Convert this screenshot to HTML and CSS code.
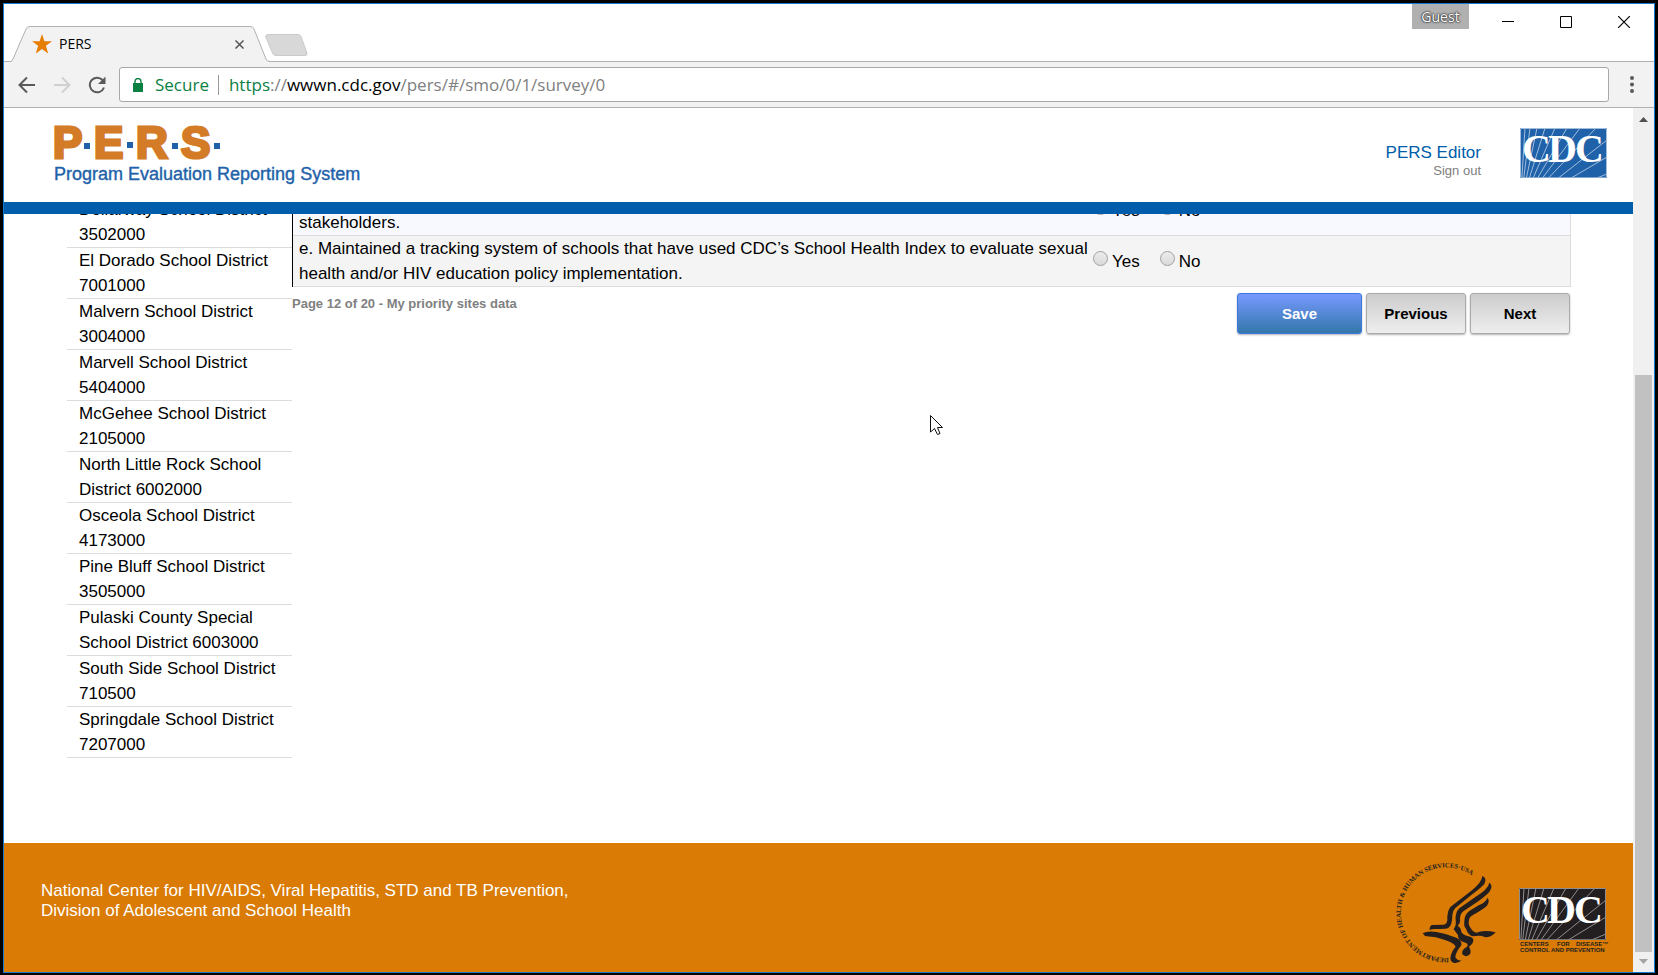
FILE: index.html
```html
<!DOCTYPE html>
<html lang="en">
<head>
  <meta charset="UTF-8" />
  <meta name="viewport" content="width=device-width, initial-scale=1.0" />
  <title>PERS</title>
  <link rel="stylesheet" href="styles.css">
</head>
<body>
  <div class="window">
    <div class="titlebar">
      <div class="tab">
        <svg class="tab-shape" width="260" height="37" viewBox="0 0 260 37">
          <path d="M0 35.500Q1 35 2 33L15 3Q16 .5 19 .5H239Q242 .5 243 3L255 33Q256 35.500 259 35.500V37H0Z" fill="#f2f2f2"/>
          <path d="M0 35.500Q1 35 2 33L15 3Q16 .5 19 .5H239Q242 .5 243 3L255 33Q256 35.500 259 35.500" fill="none" stroke="#b0b0b0"/>
        </svg>
        <svg class="tab-star" width="20" height="20" viewBox="0 0 20 20">
          <path d="M10 0L12.400 7.200H20L13.900 11.700L16.200 19.500L10 15L3.800 19.500L6.100 11.700L0 7.200H7.600Z" fill="#e67e00"/>
        </svg>
        <span class="tab-title">PERS</span>
        <button class="tab-close" aria-label="Close tab">
          <svg width="9" height="9" viewBox="0 0 9 9"><path d="M.5 .5L8.500 8.500M8.500 .5L.5 8.500" stroke="#555" stroke-width="1.500"/></svg>
        </button>
      </div>
      <button class="new-tab" aria-label="New tab">
        <svg width="43" height="22" viewBox="0 0 43 22"><path d="M3 .5H33Q35 .5 36 2.500L42 19Q42.500 21.500 40 21.500H11Q8.500 21.500 7.500 19L.7 3Q.5 .5 3 .5Z" fill="#d8d8d8" stroke="#cacaca"/></svg>
      </button>
      <div class="window-buttons">
        <button class="guest">Guest</button>
        <button aria-label="Minimize"><svg width="12" height="12" viewBox="0 0 12 12"><path d="M0 5.500H12" stroke="#000"/></svg></button>
        <button aria-label="Maximize"><svg width="12" height="12" viewBox="0 0 12 12"><path d="M.5 .5H11.500V11.500H.5Z" fill="none" stroke="#000"/></svg></button>
        <button aria-label="Close"><svg width="12" height="12" viewBox="0 0 12 12"><path d="M0 0L12 12M12 0L0 12" stroke="#000" stroke-width="1.200"/></svg></button>
      </div>
    </div>

    <div class="toolbar">
      <div class="nav">
        <button aria-label="Back"><svg width="18" height="18" viewBox="0 0 18 18"><path d="M17 9H2M9 1.500L1.500 9L9 16.500" fill="none" stroke="#5a5a5a" stroke-width="2"/></svg></button>
        <button aria-label="Forward"><svg width="18" height="18" viewBox="0 0 18 18"><path d="M1 9H16M9 1.500L16.500 9L9 16.500" fill="none" stroke="#d0d0d0" stroke-width="2"/></svg></button>
        <button aria-label="Reload"><svg width="18" height="18" viewBox="0 0 18 18"><path d="M14.500 4A7.300 7.300 0 1 0 16 11.500" fill="none" stroke="#5a5a5a" stroke-width="2"/><path d="M17.500 .5V8H10Z" fill="#5a5a5a"/></svg></button>
      </div>
      <div class="address">
        <svg width="10" height="14" viewBox="0 0 10 14"><path d="M0 5H10V14H0Z" fill="#0b8043"/><path d="M2 6V3.500A3 3 0 0 1 8 3.500V6" fill="none" stroke="#0b8043" stroke-width="1.400"/></svg>
        <span class="secure">Secure</span>
        <span class="url" role="textbox" aria-label="Address"><span class="scheme">https</span>://<span class="host">wwwn.cdc.gov</span>/pers/#/smo/0/1/survey/0</span>
      </div>
      <button class="menu" aria-label="Menu"><svg width="4" height="17" viewBox="0 0 4 17"><circle cx="2" cy="2" r="2"/><circle cx="2" cy="8.500" r="2"/><circle cx="2" cy="15" r="2"/></svg></button>
    </div>

    <div class="viewport">
      <div class="page">
        <header class="header">
          <svg class="logo" width="314" height="72" viewBox="-4 -10 314 72" role="img" aria-label="P.E.R.S. Program Evaluation Reporting System">
            <g class="logo-letters">
              <text x="-1" y="32">P</text><text x="40" y="32">E</text><text x="82" y="32">R</text><text x="127" y="32">S</text>
            </g>
            <path d="M30 17H36V23H30ZM73 16H79V22H73ZM118 17H124V23H118ZM160 17H166V23H160Z" fill="#1f62a9"/>
            <text class="logo-sub" x="0" y="54">Program Evaluation Reporting System</text>
          </svg>
          <div class="account">
            <a href="#" class="user">PERS Editor</a>
            <a href="#" class="sign-out">Sign out</a>
          </div>
          <svg class="cdc" width="87" height="50" viewBox="0 0 87 50" role="img" aria-label="CDC">
            <path d="M0 0H87V50H0Z" fill="#1f62a9"/>
            <path class="rays" d="M0 80L5 0M0 80L10 0M0 80L17 0M0 80L25 0M0 80L35 0M0 80L47 0M0 80L60 0M0 80L76 0M0 80L87 12M0 80L87 29M0 80L87 46M.5 .5H86.500V49.500H.5Z"/>
            <g class="cdc-letters"><text x="2" y="34">C</text><text x="28" y="34">D</text><text x="55" y="34">C</text></g>
          </svg>
        </header>

        <div class="scroll">
          <main class="main">
            <ul class="districts">
              <li>Dollarway School District 3502000</li>
              <li>El Dorado School District 7001000</li>
              <li>Malvern School District 3004000</li>
              <li>Marvell School District 5404000</li>
              <li>McGehee School District 2105000</li>
              <li>North Little Rock School District 6002000</li>
              <li>Osceola School District 4173000</li>
              <li>Pine Bluff School District 3505000</li>
              <li>Pulaski County Special School District 6003000</li>
              <li>South Side School District 710500</li>
              <li>Springdale School District 7207000</li>
            </ul>

            <div class="survey">
              <table>
                <tr>
                  <td class="question">stakeholders.</td>
                  <td class="choice">
                    <div class="answers">
                      <label><input type="radio" name="d">Yes</label>
                      <label><input type="radio" name="d">No</label>
                    </div>
                  </td>
                </tr>
                <tr>
                  <td class="question">e. Maintained a tracking system of schools that have used CDC’s School Health Index to evaluate sexual health and/or HIV education policy implementation.</td>
                  <td class="choice">
                    <div class="answers">
                      <label><input type="radio" name="e">Yes</label>
                      <label><input type="radio" name="e">No</label>
                    </div>
                  </td>
                </tr>
              </table>
              <div class="actions">
                <p class="progress">Page 12 of 20 - My priority sites data</p>
                <button class="save">Save</button>
                <button>Previous</button>
                <button>Next</button>
              </div>
            </div>
          </main>

          <footer class="footer">
            <p>National Center for HIV/AIDS, Viral Hepatitis, STD and TB Prevention,<br>Division of Adolescent and School Health</p>
            <svg class="hhs" width="110" height="110" viewBox="0 0 330 330" role="img" aria-label="Department of Health and Human Services USA">
              <path id="ring" d="M176 300A136 136 0 1 1 272 76" fill="none"/>
              <text><textPath href="#ring">DEPARTMENT OF HEALTH &amp; HUMAN SERVICES·USA</textPath></text>
              <path d="M277 54Q292 60 283 78Q270 92 244 111L196 150Q188 158 187 171Q187 203 174 211Q165 214 140 213Q126 212 119 216Q118 203 127 201L161 200Q171 199 172 186Q171 158 182 146L244 98Q276 73 277 54Z"/>
              <path d="M298 74Q310 82 300 99Q292 110 265 130L220 160Q210 168 210 183Q212 196 203 203Q213 209 214 222Q218 230 235 235Q252 238 250 250Q248 260 237 266Q247 284 236 292Q225 298 217 289Q213 276 231 266Q239 256 218 251Q203 246 204 231L191 214Q200 199 197 187Q195 164 208 151L256 117Q295 93 298 74Z"/>
              <path d="M292 119Q301 128 291 143Q280 153 258 166Q237 176 237 186Q234 200 240 207Q248 222 259 224Q281 215 317 223Q303 240 284 237Q270 231 250 235Q235 234 227 210Q220 207 224 181Q226 168 239 158L266 142Q289 132 292 119Z"/>
              <path d="M98 226Q112 218 139 222Q172 227 201 240Q223 253 210 267Q197 284 196 297Q201 309 215 307Q205 317 192 315Q178 310 182 294Q188 274 197 267Q196 256 165 246Q137 236 111 235Q103 235 98 226Z"/>
            </svg>
            <svg class="cdc-dark" width="92" height="68" viewBox="0 0 92 68" role="img" aria-label="Centers for Disease Control and Prevention">
              <path d="M0 0H87V52H0Z" fill="#231f20"/>
              <path class="rays" d="M0 82L5 0M0 82L10 0M0 82L17 0M0 82L25 0M0 82L35 0M0 82L47 0M0 82L60 0M0 82L76 0M0 82L87 12M0 82L87 29M0 82L87 46M.5 .5H86.500V51.500H.5Z"/>
              <g class="cdc-letters"><text x="2" y="35">C</text><text x="28" y="35">D</text><text x="55" y="35">C</text></g>
              <g class="cdc-caption"><text x="1" y="58">CENTERS</text><text x="38" y="58">FOR</text><text x="57" y="58">DISEASE™</text><text x="1" y="64">CONTROL AND PREVENTION</text></g>
            </svg>
          </footer>

          <svg class="cursor" width="14" height="21" viewBox="0 0 14 21"><path d="M.5 .5V17L4.500 13.500L7.500 19.500L10 18.500L7.500 12.500H12.500Z" fill="#fff" stroke="#111"/></svg>
        </div>
      </div>

      <div class="scrollbar">
        <svg width="9" height="5" viewBox="0 0 9 5"><path d="M0 5L4.500 0L9 5Z" fill="#505050"/></svg>
        <div class="thumb"></div>
        <svg width="9" height="5" viewBox="0 0 9 5"><path d="M0 0L4.500 5L9 0Z" fill="#a3a3a3"/></svg>
      </div>
    </div>
  </div>
</body>
</html>
```
FILE: styles.css
```css
* {
  box-sizing: border-box;
}

body {
  margin: 0;
  padding: 3px 3px 2px;
  height: 100vh;
  background: #000;
  color: #000;
  font-family: "Liberation Sans", Arial, sans-serif;
  font-size: 17px;
  line-height: 25px;
}

button {
  font-family: inherit;
  padding: 0;
  border: 0;
  background: none;
}

svg {
  display: block;
  flex-shrink: 0;
}

p {
  margin: 0;
}

.window {
  height: 100%;
  display: flex;
  flex-direction: column;
  border: 1px solid #1a7ad1;
  background: #fff;
}

/* browser frame */
.titlebar {
  display: flex;
  align-items: flex-end;
  height: 58px;
  border-bottom: 1px solid #b0b0b0;
  font-family: "Open Sans", sans-serif;
  font-size: 14px;
}

.tab {
  position: relative;
  display: flex;
  align-items: center;
  width: 260px;
  height: 36px;
  margin: 0 1px -1px 7px;
  padding: 0 27px 0 21px;
}

.tab-shape {
  position: absolute;
  left: 0;
  top: 0;
}

.tab-star,
.tab-title,
.tab-close {
  position: relative;
}

.tab-title {
  flex: 1;
  margin-left: 7px;
  padding-bottom: 2px;
}

.new-tab {
  margin-bottom: 5px;
  margin-left: -7px;
}

.window-buttons {
  display: flex;
  align-self: flex-start;
  align-items: flex-start;
  margin-left: auto;
  padding-right: 24px;
}

.window-buttons button {
  margin-left: 46px;
  padding-top: 12px;
}

.window-buttons .guest {
  width: 57px;
  height: 25px;
  margin-right: -13px;
  padding: 0;
  background: #b0b0b0;
  color: #fff;
  font-size: 14px;
  text-shadow: 0 0 1px #222, 0 0 2px #333, 0 0 2px #333;
}

.toolbar {
  display: flex;
  align-items: center;
  flex-shrink: 0;
  height: 46px;
  padding: 0 20px 0 14px;
  background: #f2f2f2;
  border-bottom: 1px solid #b0b0b0;
}

.nav {
  display: flex;
  gap: 17px;
  margin-right: 13px;
}

.address {
  flex: 1;
  display: flex;
  align-items: center;
  height: 35px;
  padding: 0 13px;
  background: #fff;
  border: 1px solid #a8a8a8;
  border-radius: 3px;
  font-family: "Open Sans", sans-serif;
  font-size: 17px;
}

.secure {
  margin: 0 10px 0 12px;
  padding-right: 9px;
  border-right: 1px solid #999;
  line-height: 20px;
  color: #0b8043;
}

.url {
  color: #808080;
}

.scheme {
  color: #0b8043;
}

.host {
  color: #000;
}

.menu {
  margin-left: 21px;
  fill: #5a5a5a;
}

.viewport {
  flex: 1;
  display: flex;
  min-height: 0;
}

.page {
  flex: 1;
  display: flex;
  flex-direction: column;
  min-width: 0;
}

.scrollbar {
  display: flex;
  flex-direction: column;
  align-items: center;
  width: 21px;
  padding: 9px 2px 8px;
  background: #f0f0f0;
}

.thumb {
  width: 17px;
  height: 577px;
  margin-top: auto;
  margin-bottom: 7px;
  background: #c1c1c1;
}

/* page header */
.header {
  display: flex;
  align-items: flex-start;
  flex-shrink: 0;
  height: 106px;
  padding: 8px 26px 0 46px;
  border-bottom: 12px solid #005dab;
}

.logo-letters {
  fill: #d47b27;
  stroke: #d47b27;
  stroke-width: 3px;
  font-weight: bold;
  font-size: 44px;
}

.logo-sub {
  fill: #1f62a9;
  stroke: #1f62a9;
  stroke-width: .4px;
  font-size: 18px;
}

.account {
  display: flex;
  flex-direction: column;
  margin: 26px 39px 0 auto;
  text-align: right;
}

.account a {
  text-decoration: none;
}

.user {
  color: #005dab;
  line-height: 22px;
}

.sign-out {
  color: #808080;
  font-size: 13px;
  line-height: 14px;
}

.cdc {
  margin-top: 12px;
}

.cdc,
.cdc-dark {
  overflow: visible;
}

.rays {
  fill: none;
  stroke: #a3bddb;
  clip-path: inset(0 view-box);
}

.cdc-dark .rays {
  stroke: #8f8d8d;
}

.cdc .rays {
  clip-path: polygon(0 0, 100% 0, 100% 50px, 0 50px);
}

.cdc-dark .rays {
  clip-path: polygon(0 0, 100% 0, 100% 52px, 0 52px);
}

.cdc-letters {
  fill: #fff;
  font-family: "Liberation Serif", serif;
  font-weight: bold;
  font-size: 40px;
}

/* scrolled to the bottom of the page */
.scroll {
  position: relative;
  flex: 1;
  display: flex;
  flex-direction: column;
  justify-content: flex-end;
  min-height: 0;
  overflow: hidden;
}

.main {
  display: flex;
  flex-shrink: 0;
  padding: 0 62px 85px 63px;
}

.districts {
  width: 225px;
  margin: 0;
  padding: 12px 0 0;
  list-style: none;
}

.districts li {
  padding: 0 12px;
  border-bottom: 1px solid #dcdcdc;
}

.survey {
  flex: 1;
}

table {
  width: 100%;
  border-collapse: separate;
  border-spacing: 0;
  border-left: 1px solid #000;
  border-right: 1px solid #dcdcdc;
}

td {
  height: 51px;
  padding: 0;
  border-bottom: 1px solid #dcdcdc;
  background: #f4f4f4;
}

tr:first-child td {
  background: #f8f9ff;
}

.question {
  padding-left: 6px;
  vertical-align: bottom;
}

.choice {
  width: 477px;
}

.answers {
  display: flex;
  gap: 20px;
}

.answers label {
  display: flex;
  gap: 4px;
}

.answers input {
  appearance: none;
  width: 15px;
  height: 15px;
  margin: 2px 0 0;
  border: 1px solid #a0a0a0;
  border-radius: 50%;
  background: linear-gradient(#ececec, #dadada);
}

.actions {
  display: flex;
  gap: 4px;
  padding: 6px 1px 0 0;
}

.progress {
  margin-right: auto;
  color: #808080;
  font-size: 13px;
  font-weight: bold;
  line-height: 22px;
}

.actions button {
  width: 100px;
  height: 41px;
  border: 1px solid #aaa;
  border-radius: 3px;
  background: linear-gradient(#ccc, #eee);
  box-shadow: 0 1px 2px rgba(0, 0, 0, .3);
  color: #000;
  font-size: 15px;
  font-weight: bold;
}

.actions .save {
  width: 125px;
  border-color: #3b78e0;
  background: linear-gradient(#7799ff, #3377aa);
  color: #fff;
}

.footer {
  display: flex;
  flex-shrink: 0;
  height: 129px;
  padding: 15px 22px 0 37px;
  background: #d97b05;
  color: #fff;
  line-height: 20px;
}

.footer p {
  margin-right: auto;
  padding-top: 23px;
}

.hhs {
  fill: #231f20;
}

.hhs text {
  font-family: "Liberation Serif", serif;
  font-size: 20px;
  font-weight: bold;
}

.cdc-dark {
  margin: 30px 0 0 19px;
}

.cdc-caption {
  fill: #231f20;
  font-size: 6px;
  font-weight: bold;
}

.cursor {
  position: absolute;
  left: 57%;
  top: 201px;
  margin-left: -3px;
}
```
